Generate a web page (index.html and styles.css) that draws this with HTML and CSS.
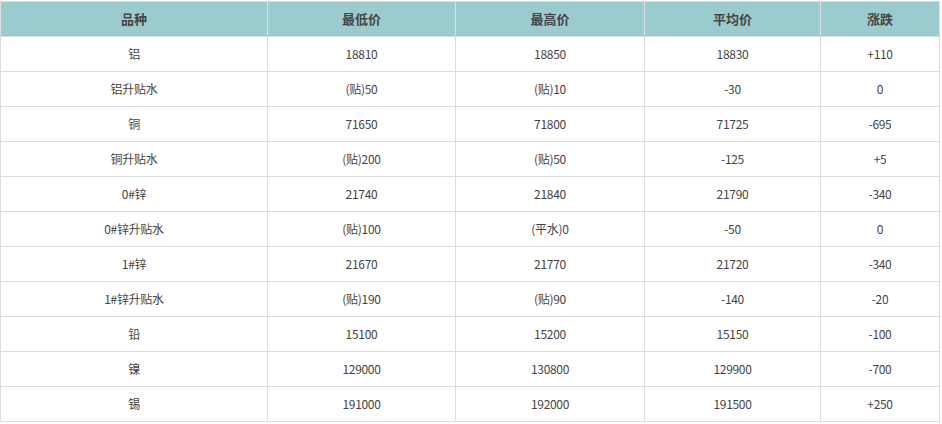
FILE: index.html
```html
<!DOCTYPE html>
<html lang="zh-CN">
<head>
<meta charset="utf-8">
<title>价格表</title>
<link rel="stylesheet" href="styles.css">
</head>
<body>
<table class="price-table">
  <colgroup>
    <col class="c1"><col class="c2"><col class="c3"><col class="c4"><col class="c5">
  </colgroup>
  <thead>
    <tr><th>品种</th><th>最低价</th><th>最高价</th><th>平均价</th><th>涨跌</th></tr>
  </thead>
  <tbody>
    <tr><td>铝</td><td>18810</td><td>18850</td><td>18830</td><td>+110</td></tr>
    <tr><td>铝升贴水</td><td>(贴)50</td><td>(贴)10</td><td>-30</td><td>0</td></tr>
    <tr><td>铜</td><td>71650</td><td>71800</td><td>71725</td><td>-695</td></tr>
    <tr><td>铜升贴水</td><td>(贴)200</td><td>(贴)50</td><td>-125</td><td>+5</td></tr>
    <tr><td>0#锌</td><td>21740</td><td>21840</td><td>21790</td><td>-340</td></tr>
    <tr><td>0#锌升贴水</td><td>(贴)100</td><td>(平水)0</td><td>-50</td><td>0</td></tr>
    <tr><td>1#锌</td><td>21670</td><td>21770</td><td>21720</td><td>-340</td></tr>
    <tr><td>1#锌升贴水</td><td>(贴)190</td><td>(贴)90</td><td>-140</td><td>-20</td></tr>
    <tr><td>铅</td><td>15100</td><td>15200</td><td>15150</td><td>-100</td></tr>
    <tr><td>镍</td><td>129000</td><td>130800</td><td>129900</td><td>-700</td></tr>
    <tr><td>锡</td><td>191000</td><td>192000</td><td>191500</td><td>+250</td></tr>
  </tbody>
</table>
</body>
</html>
```
FILE: styles.css
```css
html, body {
  margin: 0;
  padding: 0;
  background: #ffffff;
}
body {
  padding-top: 1px;
}
.price-table {
  width: 940px;
  table-layout: fixed;
  border-collapse: separate;
  border-spacing: 0;
  border-left: 1px solid #dddddd;
  border-top: 1px solid #dddddd;
  font-family: "Noto Sans CJK SC", "Noto Sans", sans-serif;
  font-size: 12px;
  color: #444444;
}
.c1 { width: 267px; }
.c2 { width: 188px; }
.c3 { width: 189px; }
.c4 { width: 176px; }
.c5 { width: 119px; }
.price-table th,
.price-table td {
  height: 34px;
  padding: 0;
  text-align: center;
  vertical-align: middle;
  border-right: 1px solid #dddddd;
  border-bottom: 1px solid #dddddd;
  box-sizing: content-box;
  line-height: 16px;
}
.price-table th {
  background: #9bcccd;
  font-size: 13px;
  font-weight: bold;
  color: #444444;
}
.price-table td {
  letter-spacing: -0.3px;
}
```
